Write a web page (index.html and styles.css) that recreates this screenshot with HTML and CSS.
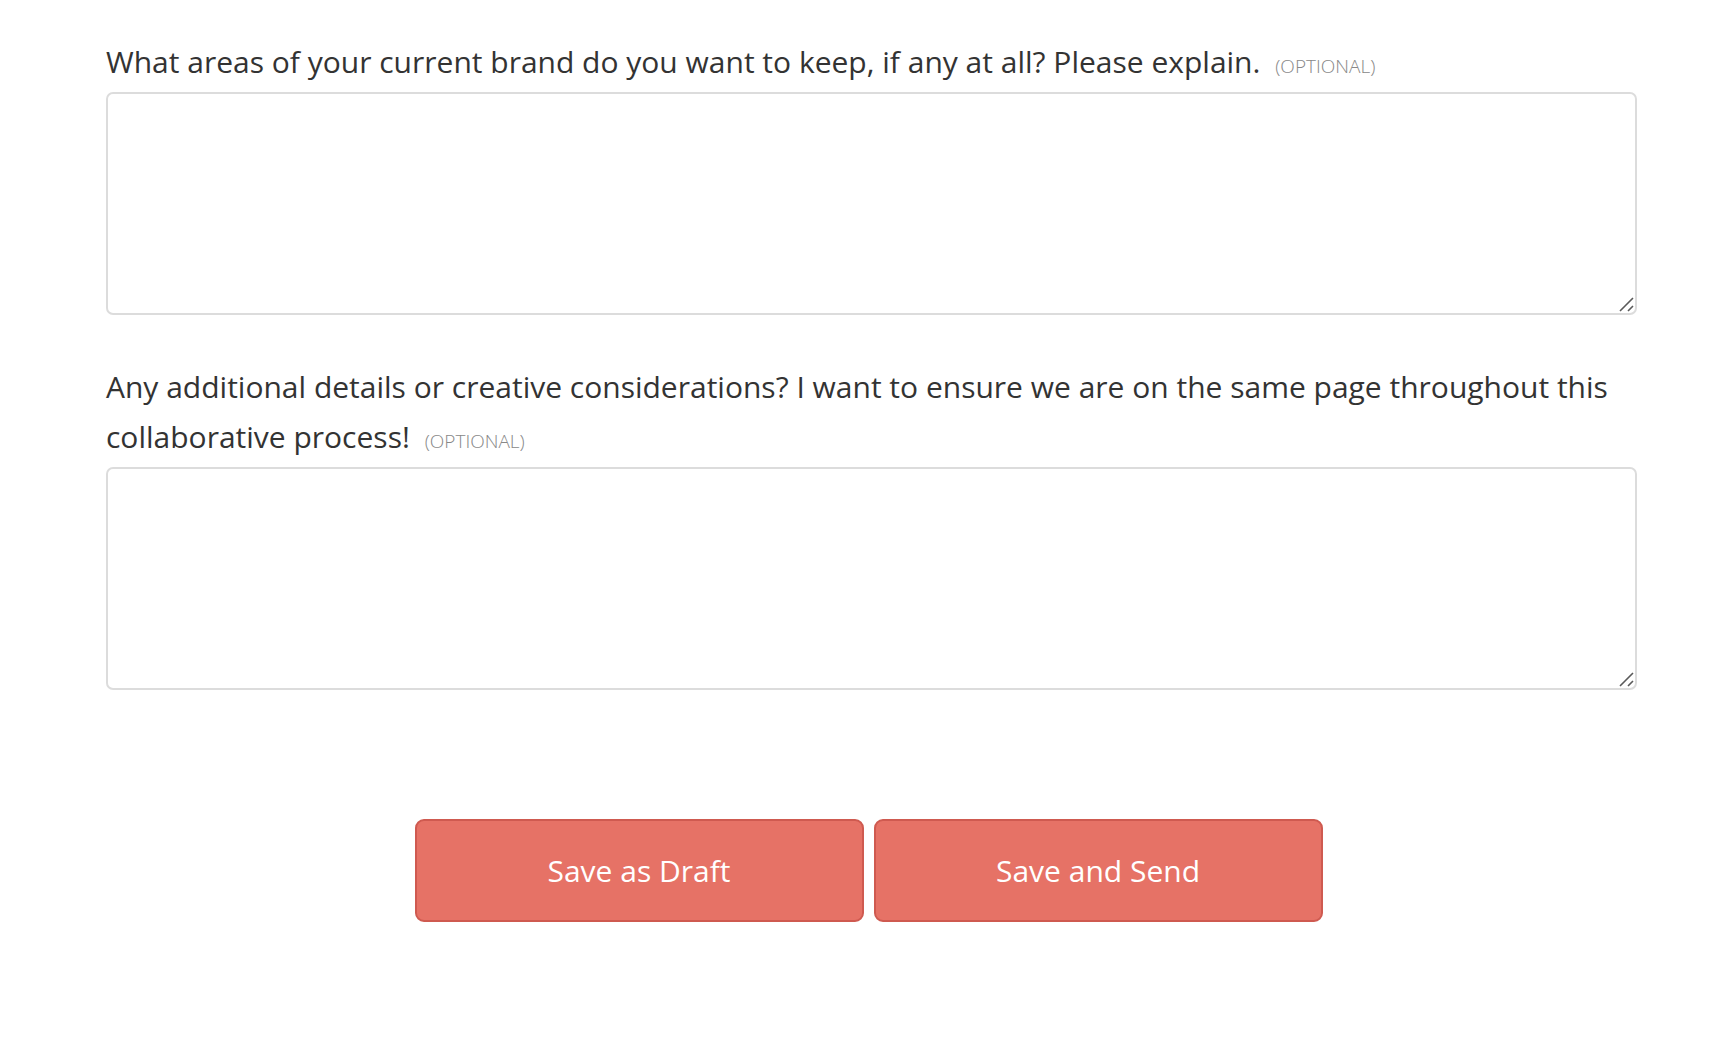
FILE: index.html
```html
<!DOCTYPE html>
<html lang="en">
<head>
    <meta charset="UTF-8">
    <meta name="viewport" content="width=device-width, initial-scale=1.0">
    <title>Brand Questionnaire</title>
    <link rel="stylesheet" href="styles.css">
</head>
<body>
    <form class="questionnaire">
        <div class="field">
            <label for="keep-areas">What areas of your current brand do you want to keep, if any at all? Please explain. <span class="optional">(Optional)</span></label>
            <div class="input-wrap">
                <textarea id="keep-areas"></textarea>
                <svg class="grip" width="16" height="16" viewBox="0 0 16 16"><path d="M2 15 L15 2 M10 15 L15 10" stroke="#5a5a5a" stroke-width="1.6" fill="none"/></svg>
            </div>
        </div>

        <div class="field">
            <label for="extra-details">Any additional details or creative considerations? I want to ensure we are on the same page throughout this collaborative process! <span class="optional">(Optional)</span></label>
            <div class="input-wrap">
                <textarea id="extra-details"></textarea>
                <svg class="grip" width="16" height="16" viewBox="0 0 16 16"><path d="M2 15 L15 2 M10 15 L15 10" stroke="#5a5a5a" stroke-width="1.6" fill="none"/></svg>
            </div>
        </div>

        <div class="actions">
            <button type="button" class="btn">Save as Draft</button>
            <button type="button" class="btn">Save and Send</button>
        </div>
    </form>
</body>
</html>
```

FILE: styles.css
```css
body {
    margin: 0;
    background: #fff;
    font-family: "Open Sans", "Noto Sans", Arial, sans-serif;
    color: #333;
}

.questionnaire {
    padding: 37px 99px 40px 106px;
}

.field {
    margin-bottom: 47px;
}

.field label {
    display: block;
    font-size: 30px;
    line-height: 50px;
    margin-bottom: 5px;
    color: #333;
}

.optional {
    font-size: 19px;
    line-height: 1;
    font-weight: 300;
    color: #888;
    text-transform: uppercase;
    margin-left: 7px;
}

.input-wrap {
    position: relative;
}

.field textarea {
    display: block;
    box-sizing: border-box;
    width: 100%;
    height: 223px;
    border: 2px solid #dcdcdc;
    border-radius: 7px;
    padding: 10px 14px;
    font-family: inherit;
    font-size: 20px;
    resize: none;
}

.grip {
    position: absolute;
    right: 3px;
    bottom: 3px;
    pointer-events: none;
}

.actions {
    display: flex;
    justify-content: center;
    gap: 10px;
    margin-top: 129px;
    padding-right: 6px;
}

.btn {
    width: 449px;
    height: 103px;
    background-color: #e67266;
    border: 2px solid #cf5a50;
    border-radius: 9px;
    color: #fff;
    font-family: inherit;
    font-size: 30px;
    cursor: pointer;
}

.btn:hover {
    opacity: 0.9;
}
```
